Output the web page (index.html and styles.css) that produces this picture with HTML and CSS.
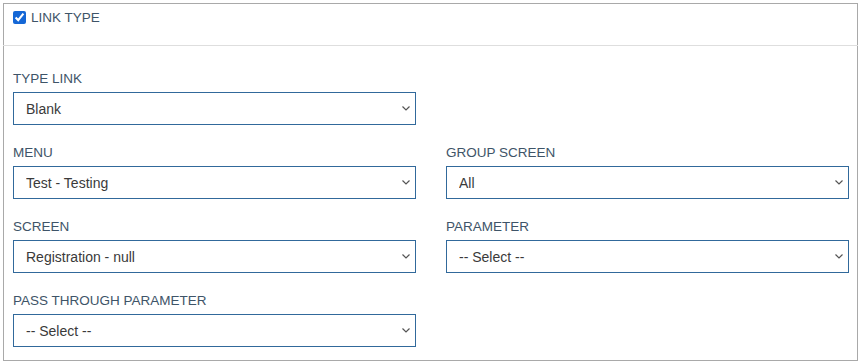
FILE: index.html
```html
<!DOCTYPE html>
<html lang="en">
<head>
    <meta charset="UTF-8">
    <meta name="viewport" content="width=device-width, initial-scale=1.0">
    <title>Link Type</title>
    <link rel="stylesheet" href="styles.css">
</head>
<body>
    <div class="panel">
        <div class="panel-header">
            <label class="check-label">
                <input type="checkbox" checked>
                <span>LINK TYPE</span>
            </label>
        </div>
        <div class="divider"></div>
        <div class="panel-body">
            <div class="form-grid">
                <div class="form-group">
                    <label class="field-label">TYPE LINK</label>
                    <div class="select-wrap">
                        <select class="field-select">
                            <option>Blank</option>
                        </select>
                        <svg class="chevron" width="8" height="5" viewBox="0 0 8 5"><path d="M0.5 0.5 L4 4 L7.5 0.5" fill="none" stroke="#555" stroke-width="1.2"/></svg>
                    </div>
                </div>
                <div></div>

                <div class="form-group">
                    <label class="field-label">MENU</label>
                    <div class="select-wrap">
                        <select class="field-select">
                            <option>Test - Testing</option>
                        </select>
                        <svg class="chevron" width="8" height="5" viewBox="0 0 8 5"><path d="M0.5 0.5 L4 4 L7.5 0.5" fill="none" stroke="#555" stroke-width="1.2"/></svg>
                    </div>
                </div>
                <div class="form-group">
                    <label class="field-label">GROUP SCREEN</label>
                    <div class="select-wrap">
                        <select class="field-select">
                            <option>All</option>
                        </select>
                        <svg class="chevron" width="8" height="5" viewBox="0 0 8 5"><path d="M0.5 0.5 L4 4 L7.5 0.5" fill="none" stroke="#555" stroke-width="1.2"/></svg>
                    </div>
                </div>

                <div class="form-group">
                    <label class="field-label">SCREEN</label>
                    <div class="select-wrap">
                        <select class="field-select">
                            <option>Registration - null</option>
                        </select>
                        <svg class="chevron" width="8" height="5" viewBox="0 0 8 5"><path d="M0.5 0.5 L4 4 L7.5 0.5" fill="none" stroke="#555" stroke-width="1.2"/></svg>
                    </div>
                </div>
                <div class="form-group">
                    <label class="field-label">PARAMETER</label>
                    <div class="select-wrap">
                        <select class="field-select">
                            <option>-- Select --</option>
                        </select>
                        <svg class="chevron" width="8" height="5" viewBox="0 0 8 5"><path d="M0.5 0.5 L4 4 L7.5 0.5" fill="none" stroke="#555" stroke-width="1.2"/></svg>
                    </div>
                </div>

                <div class="form-group last">
                    <label class="field-label">PASS THROUGH PARAMETER</label>
                    <div class="select-wrap">
                        <select class="field-select">
                            <option>-- Select --</option>
                        </select>
                        <svg class="chevron" width="8" height="5" viewBox="0 0 8 5"><path d="M0.5 0.5 L4 4 L7.5 0.5" fill="none" stroke="#555" stroke-width="1.2"/></svg>
                    </div>
                </div>
            </div>
        </div>
    </div>
</body>
</html>
```

FILE: styles.css
```css
body {
    margin: 3px 2px 0 3px;
    font-family: "Liberation Sans", Arial, sans-serif;
    background: #fff;
}
.panel {
    border: 1px solid #a9a9a9;
    height: 358px;
    box-sizing: border-box;
}
.panel-header {
    height: 41px;
    padding: 6px 9px 0 9px;
    box-sizing: border-box;
}
.check-label {
    display: flex;
    align-items: center;
    gap: 5px;
    font-size: 13.5px;
    line-height: 15px;
    color: #3e5468;
}
.check-label input {
    width: 13px;
    height: 13px;
    margin: 0;
    accent-color: #1467d6;
}
.divider {
    height: 1px;
    background: #dedede;
    margin: 0 -4px;
}
.panel-body {
    padding: 25px 8px 0 9px;
}
.form-grid {
    display: grid;
    grid-template-columns: 403px 403px;
    column-gap: 30px;
}
.form-group {
    margin-bottom: 20px;
}
.form-group.last {
    margin-bottom: 0;
}
.field-label {
    display: block;
    font-size: 13.5px;
    line-height: 15px;
    color: #3e5468;
    margin-bottom: 6px;
}
.select-wrap {
    position: relative;
}
.field-select {
    display: block;
    width: 100%;
    height: 33px;
    padding: 0 20px 0 12px;
    border: 1px solid #31699b;
    border-radius: 0;
    background: #fff;
    color: #3a3a3a;
    font-family: "Liberation Sans", Arial, sans-serif;
    font-size: 14px;
    box-sizing: border-box;
    appearance: none;
    -webkit-appearance: none;
}
.chevron {
    position: absolute;
    right: 6px;
    top: 14px;
    pointer-events: none;
}
```
